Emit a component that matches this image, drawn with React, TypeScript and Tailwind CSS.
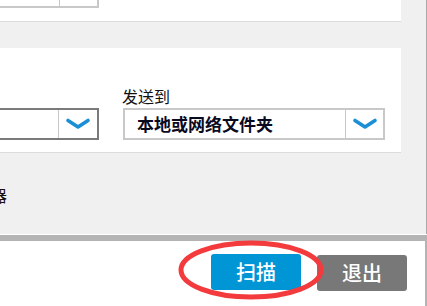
const font = { fontFamily: '"Noto Sans CJK SC", "Noto Sans", sans-serif' };

function Chevron() {
  return (
    <svg width="26" height="12" viewBox="0 0 26 12" fill="none">
      <path d="M3 2.5 L13 9 L23 2.5" stroke="#1b8fd6" strokeWidth="3.6" strokeLinecap="round" strokeLinejoin="round" />
    </svg>
  );
}

export default function App() {
  return (
    <div className="relative w-[427px] h-[306px] overflow-hidden bg-white flex flex-col" style={font}>
      {/* upper settings area */}
      <div className="h-[234px] flex bg-[#f0f0f0]">
        <div className="w-[401px] flex flex-col">
          <div className="h-[22px] bg-white border-b border-[#dcdcdc]">
            <div className="w-[99px] h-[8px] flex border-r-2 border-b-2 border-[#c8c8c8]">
              <div className="w-[60px] border-r border-[#c8c8c8]" />
            </div>
          </div>
          <div className="h-[26px]" />
          <div className="h-[105px] bg-white border-b border-[#dcdcdc] flex items-end pb-[12px]">
            {/* left select, cut off */}
            <div className="w-[99px] h-[32px] flex border-2 border-l-0 border-[#7a7a7a]">
              <div className="w-[59px] border-r border-[#c8c8c8]" />
              <div className="flex-1 flex items-center justify-center">
                <Chevron />
              </div>
            </div>
            <div className="ml-[24px] flex flex-col">
              <div className="text-[16px] leading-[20px] text-[#111] mb-[2px] -ml-[1px]">发送到</div>
              <div className="w-[262px] h-[32px] flex border-2 border-[#c8c8c8]">
                <div className="w-[221px] border-r border-[#c8c8c8] flex items-center pl-[12px] text-[17px] font-bold text-[#0a0a1e]">
                  本地或网络文件夹
                </div>
                <div className="flex-1 flex items-center justify-center">
                  <Chevron />
                </div>
              </div>
            </div>
          </div>
          <div className="flex-1 pt-[32px]">
            <div className="-ml-[9px] text-[16px] leading-[20px] text-[#111]">器</div>
          </div>
        </div>
        <div className="flex-1 border-r border-[#a9a9a9]" />
      </div>
      <div className="h-[1px] bg-white" />
      <div className="h-[6px] bg-[#b4b4b4]" />
      {/* buttons */}
      <div className="flex-1 flex justify-end items-start gap-[16px] pt-[13px] pr-[18px] border-r-2 border-[#b4b4b4]">
        <button className="w-[90px] h-[36px] rounded-[3px] bg-[#0096d6] text-white text-[20px] font-medium leading-none">
          扫描
        </button>
        <button className="mt-[1px] w-[90px] h-[36px] rounded-[3px] bg-[#787878] text-white text-[20px] font-medium leading-none">
          退出
        </button>
      </div>
      {/* red annotation */}
      <svg className="absolute left-0 top-0 pointer-events-none" width="427" height="306">
        <ellipse cx="251" cy="270" rx="70" ry="27" fill="none" stroke="#f33a3c" strokeWidth="5" />
      </svg>
    </div>
  );
}
